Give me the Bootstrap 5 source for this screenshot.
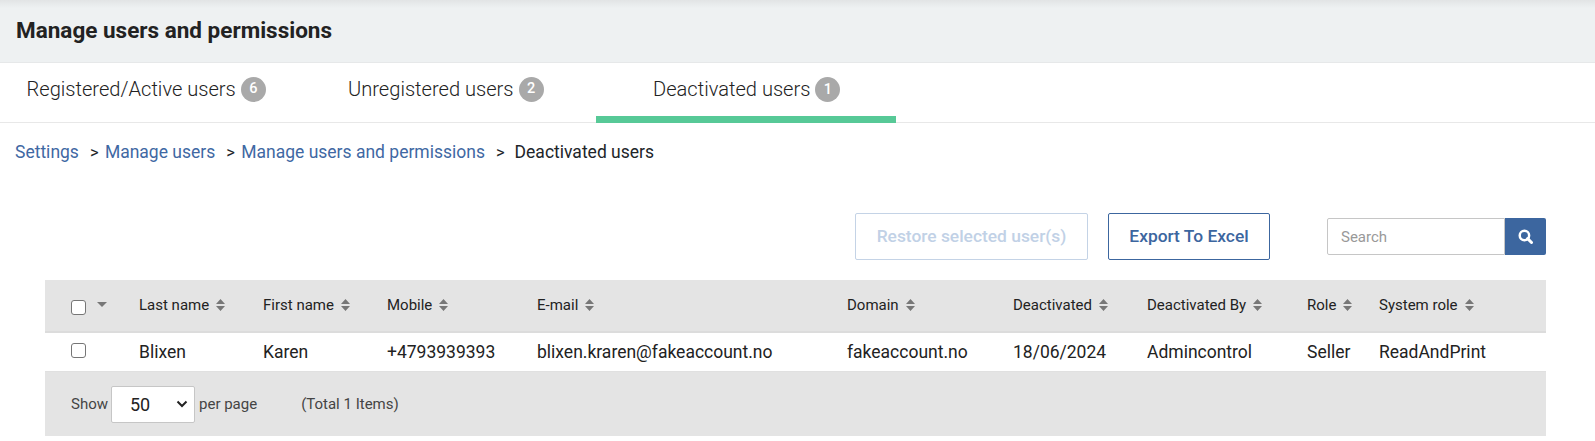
<!DOCTYPE html>
<html lang="en">
<head>
<meta charset="utf-8">
<title>Manage users</title>
<link href="https://cdn.jsdelivr.net/npm/bootstrap@5.3.0/dist/css/bootstrap.min.css" rel="stylesheet">
<style>
html,body{height:441px;overflow:hidden}
body{font-family:Roboto,"Liberation Sans",sans-serif;background:#fff;color:#212529}
.page-head{height:63px;background:linear-gradient(#e2e4e5 0,#eef1f2 8px);border-bottom:1px solid #e6e8e9;padding:0 16px 2px}
.page-head h1{font-size:22.5px;font-weight:700;margin:0;color:#222}
.tabbar{height:60px;border-bottom:1px solid #e8e8e8}
.tab-item{height:59px;font-size:20.1px;font-weight:300;color:#222;display:flex;align-items:center;padding-bottom:7px;text-decoration:none}
.tab-a{width:321px;padding-left:26.5px}
.tab-b{width:275px;padding-left:27px}
.tab-c{width:300px;padding-left:57px;border-bottom:7px solid #57c997;height:60px;padding-bottom:0}
.tab-count{width:25px;height:25px;border-radius:50%;background:#a9a9a9;color:#fff;font-size:14.5px;font-weight:500;display:inline-flex;align-items:center;justify-content:center;margin-left:5px}
.crumbs{padding:18px 0 0 15px;font-size:17.5px;height:57px;line-height:23px;white-space:nowrap}
.crumbs a{color:#3f68a3;text-decoration:none}
.crumbs .sep{margin:0 2px 0 11px;font-size:16.5px}
.crumbs .sep-l{margin:0 10px 0 11px;font-size:16.5px}
.tools{height:47px;margin-top:33px;padding-right:49px}
.act-btn{height:47px;font-size:17.4px;font-weight:500;border-radius:2px;background:#fff;padding:0;border:1px solid #3c669f;color:#3c669f}
.act-restore{width:233px;margin-right:20px}
.act-restore:disabled{background:#fff;border-color:#c4d3e6;color:#c1d1e6;opacity:1}
.act-export{width:162px;margin-right:57px}
.act-export:hover{background:#fff;color:#3c669f;border-color:#3c669f}
.find-box{width:219px;height:37px}
.find-input{width:178px;height:37px;font-size:15px;padding:0 13px;border:1px solid #c6c6c6;border-radius:2px 0 0 2px;box-shadow:none}
.find-input::placeholder{color:#999}
.find-btn{width:41px;height:37px;padding:0;background:#3c669f;border:0;border-radius:0 2px 2px 0;display:flex;align-items:center;justify-content:center}
.grid-wrap{margin:20px 49px 0 45px;background:#e4e4e4;height:156px}
.user-grid{table-layout:fixed;width:1501px;margin:0;border-collapse:collapse}
.user-grid th{height:52px;background:#e4e4e4;font-size:15px;font-weight:400;color:#222;padding:0 0 0 12px;border-bottom:2px solid #dcdcdc;white-space:nowrap;vertical-align:middle}
.user-grid td{height:39px;background:#fff;font-size:17.5px;color:#222;padding:0 0 0 12px;border-bottom:1px solid #e0e0e0;white-space:nowrap;vertical-align:middle}
.user-grid .cell-check{padding-left:26px}
.user-grid th.cell-check{padding-top:4px}
.user-grid td.cell-check{padding-bottom:2px}
.user-grid .form-check-input{width:15px;height:15px;margin:0;border:1px solid #767676;border-radius:3px;display:block;background-color:#fff}
.w1{width:82px}.w2{width:124px}.w3{width:124px}.w4{width:150px}.w5{width:310px}.w6{width:166px}.w7{width:134px}.w8{width:160px}.w9{width:72px}.w10{width:179px}
.sort-ico{display:inline-block;width:9px;height:12px;margin-left:7px;vertical-align:-1px}
.drop-ico{width:10px;height:5px;margin:0 0 6px 11px;flex:none}
.grid-foot{height:65px;padding-left:26px;font-size:15px;color:#444}
.size-select{width:84px;height:37px;margin:0 4px 0 3px;font-size:18px;padding:0 0 0 18px;border:1px solid #c6c6c6;border-radius:2px;color:#222;background-image:url("data:image/svg+xml,%3Csvg xmlns='http://www.w3.org/2000/svg' viewBox='0 0 12 8'%3E%3Cpath d='M1.5 1.5L6 6l4.5-4.5' fill='none' stroke='%23222' stroke-width='2'/%3E%3C/svg%3E");background-size:12px 8px;background-position:right 6px center;box-shadow:none}
.total-txt{margin-left:44px}
</style>
</head>
<body>
<div class="page-head d-flex align-items-center"><h1>Manage users and permissions</h1></div>
<nav class="tabbar d-flex">
  <a class="tab-item tab-a" href="#">Registered/Active users<span class="tab-count">6</span></a>
  <a class="tab-item tab-b" href="#">Unregistered users<span class="tab-count">2</span></a>
  <a class="tab-item tab-c" href="#">Deactivated users<span class="tab-count">1</span></a>
</nav>
<div class="crumbs"><a href="#">Settings</a><span class="sep">&gt;</span> <a href="#">Manage users</a><span class="sep">&gt;</span> <a href="#">Manage users and permissions</a><span class="sep-l">&gt;</span>Deactivated users</div>
<div class="tools d-flex justify-content-end align-items-center">
  <button class="btn act-btn act-restore" disabled>Restore selected user(s)</button>
  <button class="btn act-btn act-export">Export To Excel</button>
  <div class="find-box d-flex">
    <input class="form-control find-input" type="text" placeholder="Search">
    <button class="btn find-btn" aria-label="Search"><svg width="15" height="15" viewBox="0 0 14 14"><circle cx="6" cy="6" r="4.4" fill="none" stroke="#fff" stroke-width="2.3"/><path d="M9 9l3.6 3.6" stroke="#fff" stroke-width="2.8" stroke-linecap="round"/></svg></button>
  </div>
</div>
<div class="grid-wrap">
  <table class="user-grid">
    <colgroup><col class="w1"><col class="w2"><col class="w3"><col class="w4"><col class="w5"><col class="w6"><col class="w7"><col class="w8"><col class="w9"><col class="w10"></colgroup>
    <thead><tr>
      <th class="cell-check"><div class="d-flex align-items-center"><input class="form-check-input" type="checkbox" aria-label="Select all"><svg class="drop-ico" viewBox="0 0 10 5"><path d="M0 0h10L5 5z" fill="#777"/></svg></div></th>
      <th>Last name<svg class="sort-ico" viewBox="0 0 9 12"><path d="M4.5 0L9 5H0zM0 7h9l-4.5 5z" fill="#777"/></svg></th>
      <th>First name<svg class="sort-ico" viewBox="0 0 9 12"><path d="M4.5 0L9 5H0zM0 7h9l-4.5 5z" fill="#777"/></svg></th>
      <th>Mobile<svg class="sort-ico" viewBox="0 0 9 12"><path d="M4.5 0L9 5H0zM0 7h9l-4.5 5z" fill="#777"/></svg></th>
      <th>E-mail<svg class="sort-ico" viewBox="0 0 9 12"><path d="M4.5 0L9 5H0zM0 7h9l-4.5 5z" fill="#777"/></svg></th>
      <th>Domain<svg class="sort-ico" viewBox="0 0 9 12"><path d="M4.5 0L9 5H0zM0 7h9l-4.5 5z" fill="#777"/></svg></th>
      <th>Deactivated<svg class="sort-ico" viewBox="0 0 9 12"><path d="M4.5 0L9 5H0zM0 7h9l-4.5 5z" fill="#777"/></svg></th>
      <th>Deactivated By<svg class="sort-ico" viewBox="0 0 9 12"><path d="M4.5 0L9 5H0zM0 7h9l-4.5 5z" fill="#777"/></svg></th>
      <th>Role<svg class="sort-ico" viewBox="0 0 9 12"><path d="M4.5 0L9 5H0zM0 7h9l-4.5 5z" fill="#777"/></svg></th>
      <th>System role<svg class="sort-ico" viewBox="0 0 9 12"><path d="M4.5 0L9 5H0zM0 7h9l-4.5 5z" fill="#777"/></svg></th>
    </tr></thead>
    <tbody><tr>
      <td class="cell-check"><input class="form-check-input" type="checkbox" aria-label="Select Blixen"></td>
      <td>Blixen</td><td>Karen</td><td>+4793939393</td><td>blixen.kraren@fakeaccount.no</td><td>fakeaccount.no</td><td>18/06/2024</td><td>Admincontrol</td><td>Seller</td><td>ReadAndPrint</td>
    </tr></tbody>
  </table>
  <div class="grid-foot d-flex align-items-center">
    <span>Show</span>
    <select class="form-select size-select" aria-label="Items per page"><option>50</option></select>
    <span>per page</span>
    <span class="total-txt">(Total 1 Items)</span>
  </div>
</div>
<script src="https://cdn.jsdelivr.net/npm/bootstrap@5.3.0/dist/js/bootstrap.bundle.min.js"></script>
</body>
</html>
